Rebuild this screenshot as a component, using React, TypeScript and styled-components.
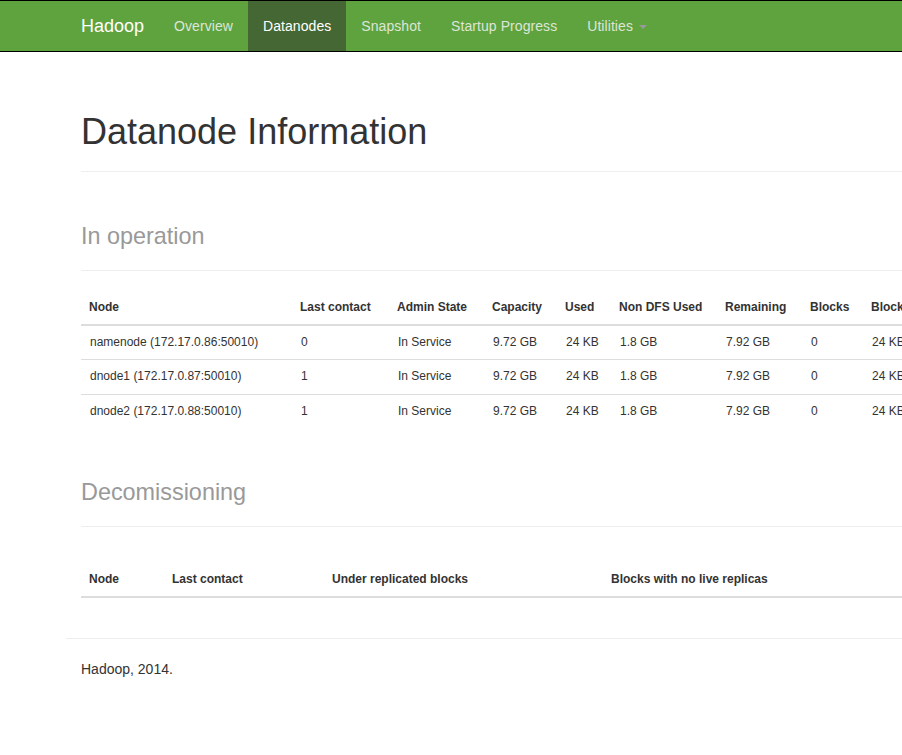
import React from "react";
import styled, { createGlobalStyle } from "styled-components";

const Global = createGlobalStyle`
  html, body { margin: 0; padding: 0; }
  body {
    font-family: "Liberation Sans", Arial, Helvetica, sans-serif;
    font-size: 14px;
    line-height: 1.42857143;
    color: #333;
    background: #fff;
    overflow: hidden;
  }
  * { box-sizing: border-box; }
`;

const Page = styled.div`
  width: 1302px;
`;

const Navbar = styled.nav`
  height: 52px;
  background: #5fa33e;
  border-top: 1px solid #000;
  border-bottom: 1px solid #000;
  margin-bottom: 20px;
`;

const NavInner = styled.div`
  width: 1170px;
  margin: 0 auto;
  display: flex;
  align-items: stretch;
  height: 50px;
`;

const Brand = styled.a`
  display: block;
  padding: 15px;
  font-size: 18px;
  line-height: 20px;
  color: #fff;
  text-decoration: none;
`;

const NavItem = styled.a<{ $active?: boolean }>`
  display: flex;
  align-items: center;
  padding: 15px;
  line-height: 20px;
  font-size: 14px;
  letter-spacing: 0.07px;
  color: ${(p) => (p.$active ? "#fff" : "#dde5d8")};
  background: ${(p) => (p.$active ? "#446733" : "transparent")};
  text-decoration: none;
`;

const Caret = styled.span`
  display: inline-block;
  width: 0;
  height: 0;
  margin-left: 6px;
  margin-top: 2px;
  border-top: 4px solid #999;
  border-left: 4px solid transparent;
  border-right: 4px solid transparent;
`;

const Container = styled.div`
  display: flow-root;
  width: 1170px;
  margin: 0 auto;
  padding: 0 15px;
`;

const PageHeader = styled.div`
  padding-bottom: 9px;
  margin: 40px 0 20px;
  border-bottom: 1px solid #eee;
`;

const H1 = styled.h1`
  font-size: 36px;
  font-weight: 500;
  line-height: 1.1;
  margin: 20px 0 10px;
  color: #333;
`;

const Small = styled.small`
  font-size: 65%;
  font-weight: normal;
  color: #999;
`;

const Table = styled.table<{ $gap?: number }>`
  width: 100%;
  border-collapse: collapse;
  border-spacing: 0;
  table-layout: fixed;
  font-size: 12px;
  margin-top: ${(p) => p.$gap ?? 0}px;
  margin-bottom: 20px;
`;

const Th = styled.th`
  text-align: left;
  font-weight: bold;
  padding: 8px;
  line-height: 1.42857143;
  vertical-align: bottom;
  border-bottom: 2px solid #ddd;
  color: #333;
  white-space: nowrap;
  overflow: hidden;
`;

const Td = styled.td`
  padding: 8px 8px 8px 9px;
  line-height: 1.42857143;
  vertical-align: top;
  border-top: 1px solid #ddd;
  color: #333;
  white-space: nowrap;
  overflow: hidden;
`;

const Footer = styled.div`
  display: flow-root;
  margin: 0 -15px;
`;

const Hr = styled.hr`
  margin: 20px 0;
  border: 0;
  border-top: 1px solid #eee;
`;

const FooterText = styled.p`
  margin: 0 0 10px;
  padding: 0 15px;
`;

const opCols = [211, 97, 95, 73, 54, 106, 85, 61, 110, 120, 228];
const opHeads = [
  "Node",
  "Last contact",
  "Admin State",
  "Capacity",
  "Used",
  "Non DFS Used",
  "Remaining",
  "Blocks",
  "Block pool used",
  "Failed Volumes",
  "Version",
];
const rows = [
  ["namenode (172.17.0.86:50010)", "0"],
  ["dnode1 (172.17.0.87:50010)", "1"],
  ["dnode2 (172.17.0.88:50010)", "1"],
];

const decCols = [83, 160, 279, 618];
const decHeads = [
  "Node",
  "Last contact",
  "Under replicated blocks",
  "Blocks with no live replicas",
];

export default function App() {
  return (
    <Page>
      <Global />
      <Navbar>
        <NavInner>
          <Brand href="#">Hadoop</Brand>
          <NavItem href="#">Overview</NavItem>
          <NavItem href="#" $active>
            Datanodes
          </NavItem>
          <NavItem href="#">Snapshot</NavItem>
          <NavItem href="#">Startup Progress</NavItem>
          <NavItem href="#">
            Utilities <Caret />
          </NavItem>
        </NavInner>
      </Navbar>
      <Container>
        <PageHeader>
          <H1>Datanode Information</H1>
        </PageHeader>
        <PageHeader>
          <H1>
            <Small>In operation</Small>
          </H1>
        </PageHeader>
        <Table>
          <colgroup>
            {opCols.map((w, i) => (
              <col key={i} style={{ width: w }} />
            ))}
          </colgroup>
          <thead>
            <tr>
              {opHeads.map((h) => (
                <Th key={h}>{h}</Th>
              ))}
            </tr>
          </thead>
          <tbody>
            {rows.map(([node, lc]) => (
              <tr key={node}>
                <Td>{node}</Td>
                <Td>{lc}</Td>
                <Td>In Service</Td>
                <Td>9.72 GB</Td>
                <Td>24 KB</Td>
                <Td>1.8 GB</Td>
                <Td>7.92 GB</Td>
                <Td>0</Td>
                <Td>24 KB (0%)</Td>
                <Td>0</Td>
                <Td>2.4.0</Td>
              </tr>
            ))}
          </tbody>
        </Table>
        <PageHeader>
          <H1>
            <Small>Decomissioning</Small>
          </H1>
        </PageHeader>
        <Table $gap={36}>
          <colgroup>
            {decCols.map((w, i) => (
              <col key={i} style={{ width: w }} />
            ))}
          </colgroup>
          <thead>
            <tr>
              {decHeads.map((h) => (
                <Th key={h}>{h}</Th>
              ))}
            </tr>
          </thead>
          <tbody />
        </Table>
        <Footer>
          <Hr />
          <FooterText>Hadoop, 2014.</FooterText>
        </Footer>
      </Container>
    </Page>
  );
}
